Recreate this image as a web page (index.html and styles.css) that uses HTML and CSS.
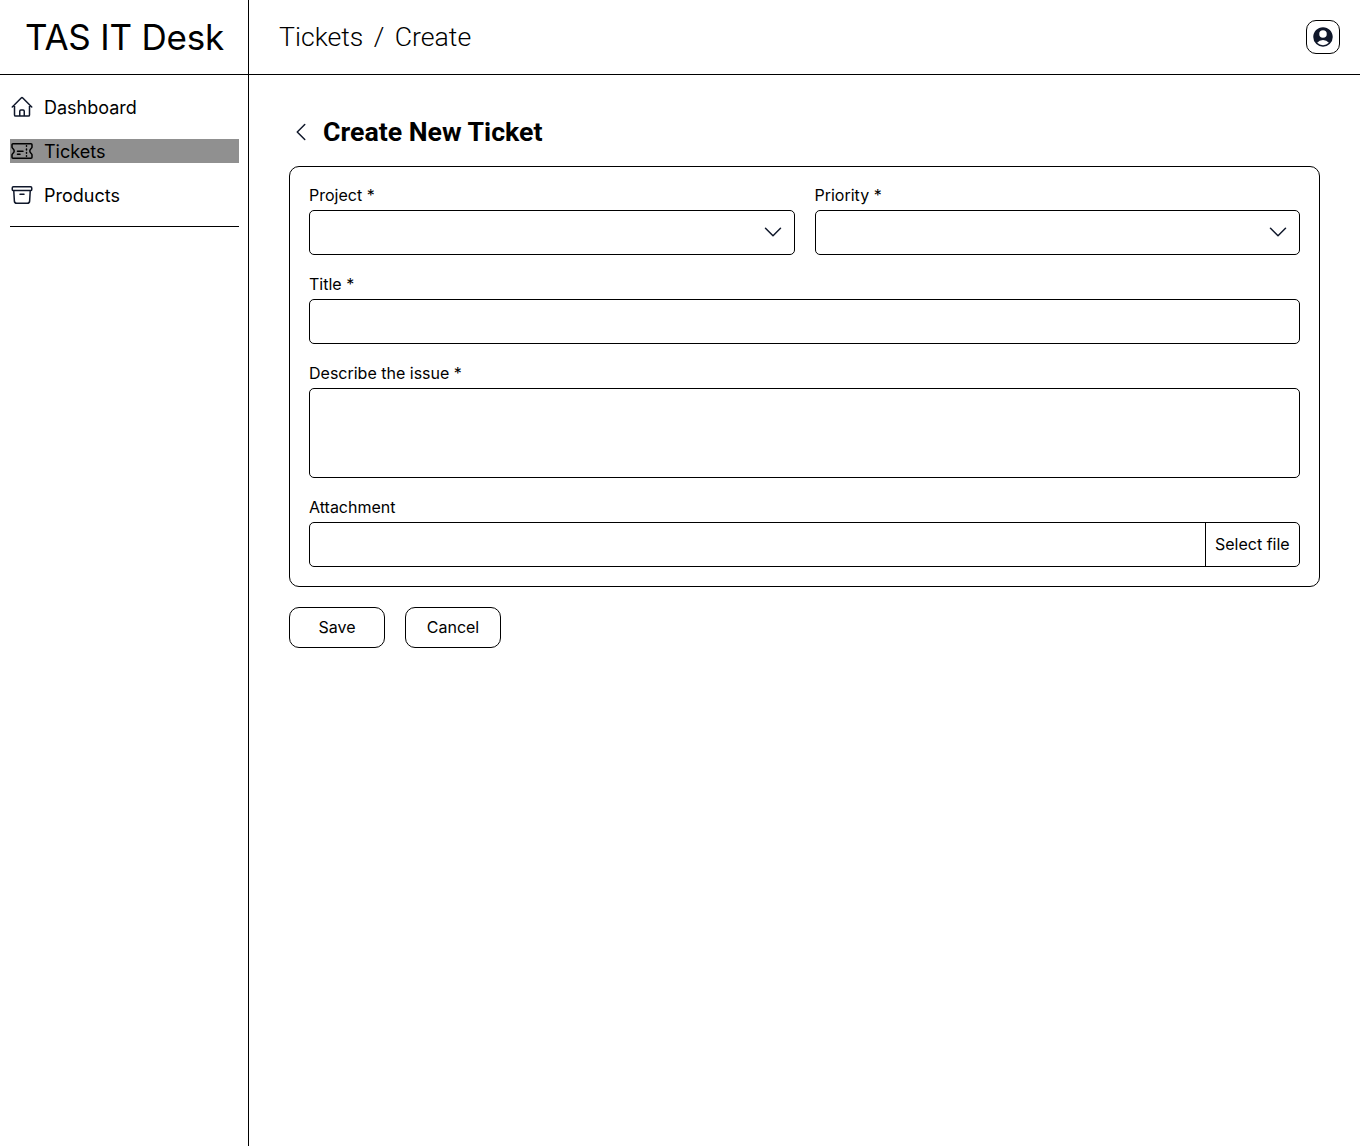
FILE: index.html
```html
<!DOCTYPE html>
<html lang="en">
<head>
<meta charset="utf-8">
<title>TAS IT Desk</title>
<link rel="stylesheet" href="styles.css">
</head>
<body>
<div class="app">
  <aside class="sidebar">
    <div class="brand">TAS IT Desk</div>
    <nav class="nav">
      <a class="nav-item">
        <svg class="icon" viewBox="0 0 24 24"><path d="M2.250 12l8.954-8.955a1.126 1.126 0 011.591 0L21.750 12M4.500 9.750v10.125c0 .621.504 1.125 1.125 1.125H9.750v-4.875c0-.621.504-1.125 1.125-1.125h2.250c.621 0 1.125.504 1.125 1.125V21h4.125c.621 0 1.125-.504 1.125-1.125V9.750M8.250 21h8.250"/></svg>
        <span>Dashboard</span>
      </a>
      <a class="nav-item active">
        <svg class="icon" viewBox="0 0 24 24"><path d="M3 4.700H21a1 1 0 011 1V8.300C22 9.300 19.800 10 19.800 12S22 14.700 22 15.700V18.300a1 1 0 01-1 1H3a1 1 0 01-1-1V15.700C2 14.700 4.200 14 4.200 12S2 9.300 2 8.300V5.700a1 1 0 011-1z"/><path d="M16.500 6.800v.5m0 2.800v.8m0 2.500v.8m0 2.500v.5M7.500 12.300h5.500M7.500 15.200h2.500"/></svg>
        <span>Tickets</span>
      </a>
      <a class="nav-item">
        <svg class="icon" viewBox="0 0 24 24"><path d="M20.250 7.500l-.625 10.632a2.250 2.250 0 01-2.247 2.118H6.622a2.250 2.250 0 01-2.247-2.118L3.750 7.500M10 11.250h4M3.375 7.500h17.250c.621 0 1.125-.504 1.125-1.125v-1.500c0-.621-.504-1.125-1.125-1.125H3.375c-.621 0-1.125.504-1.125 1.125v1.500c0 .621.504 1.125 1.125 1.125z"/></svg>
        <span>Products</span>
      </a>
    </nav>
  </aside>
  <div class="content">
    <header class="topbar">
      <div class="breadcrumb"><span>Tickets</span><span>/</span><span>Create</span></div>
      <button class="profile" aria-label="Profile">
        <svg class="icon solid" viewBox="0 0 24 24"><path fill-rule="evenodd" d="M18.685 19.097A9.723 9.723 0 0021.750 12c0-5.385-4.365-9.750-9.750-9.750S2.250 6.615 2.250 12a9.723 9.723 0 003.065 7.097A9.716 9.716 0 0012 21.750a9.716 9.716 0 006.685-2.653zm-12.540-1.285A7.486 7.486 0 0112 15a7.486 7.486 0 015.855 2.812A8.224 8.224 0 0112 20.250a8.224 8.224 0 01-5.855-2.438zM15.750 9a3.750 3.750 0 11-7.500 0 3.750 3.750 0 017.500 0z"/></svg>
      </button>
    </header>
    <main class="main">
      <div class="heading">
        <svg class="icon" viewBox="0 0 24 24"><path d="M15.750 19.500L8.250 12l7.500-7.500"/></svg>
        <h1>Create New Ticket</h1>
      </div>
      <form class="card">
        <div class="row">
          <div class="field">
            <label>Project *</label>
            <div class="control select"><svg class="icon" viewBox="0 0 24 24"><path d="M19.500 8.250l-7.500 7.500-7.500-7.500"/></svg></div>
          </div>
          <div class="field">
            <label>Priority *</label>
            <div class="control select"><svg class="icon" viewBox="0 0 24 24"><path d="M19.500 8.250l-7.500 7.500-7.500-7.500"/></svg></div>
          </div>
        </div>
        <div class="field">
          <label>Title *</label>
          <div class="control"></div>
        </div>
        <div class="field">
          <label>Describe the issue *</label>
          <div class="control multiline"></div>
        </div>
        <div class="field">
          <label>Attachment</label>
          <div class="control file"><span class="file-button">Select file</span></div>
        </div>
      </form>
      <div class="actions">
        <button class="button">Save</button>
        <button class="button">Cancel</button>
      </div>
    </main>
  </div>
</div>
</body>
</html>
```
FILE: styles.css
```css
* { box-sizing: border-box; }
body { margin: 0; background: #fff; color: #000; font: 400 16px/19px Inter, sans-serif; }
.app { display: flex; min-height: 1146px; }
.sidebar { width: 249px; flex: none; border-right: 1px solid #000; }
.brand { height: 75px; border-bottom: 1px solid #000; display: flex; align-items: center; justify-content: center; font-size: 35px; line-height: 44px; letter-spacing: -0.2px; padding-left: 1px; padding-bottom: 1px; white-space: nowrap; }
.nav { margin: 0 9px 0 10px; padding: 20px 0; display: flex; flex-direction: column; gap: 20px; border-bottom: 1px solid #000; height: 152px; }
.nav-item { display: flex; align-items: center; gap: 10px; height: 24px; font-size: 18px; line-height: 22px; }
.nav-item span { padding-top: 2px; }
.nav-item.active { background: #909090; }
.nav-item.active .icon { stroke: #000; }
.icon { width: 24px; height: 24px; flex: none; fill: none; stroke: #0f172a; stroke-width: 1.5; stroke-linecap: round; stroke-linejoin: round; }
.icon.solid { fill: #0f172a; stroke: none; }
.content { flex: 1; min-width: 0; }
.topbar { height: 75px; border-bottom: 1px solid #000; padding: 0 20px 0 30px; display: flex; align-items: center; justify-content: space-between; }
.breadcrumb { display: flex; gap: 10.4px; font: 300 26.67px/33px Roboto, sans-serif; padding-top: 1px; }
.profile { width: 34px; height: 34px; padding: 0; border: 1px solid #000; border-radius: 10px; background: #fff; display: flex; align-items: center; justify-content: center; }
.main { padding: 40px 40px 0; }
.heading { display: flex; align-items: center; gap: 10px; height: 33px; margin-bottom: 18px; }
h1 { margin: 0; font: 700 26.7px/33px Roboto, sans-serif; padding-top: 1px; }
.card { border: 1px solid #000; border-radius: 10px; padding: 19px; display: flex; flex-direction: column; gap: 20px; }
.row { display: flex; gap: 20px; }
.field { flex: 1; display: flex; flex-direction: column; gap: 5px; }
.control { height: 45px; border: 1px solid #000; border-radius: 5px; }
.select { display: flex; align-items: center; justify-content: flex-end; padding: 0 9px 1px 0; }
.multiline { height: 90px; }
.file { display: flex; justify-content: flex-end; }
.file-button { display: flex; align-items: center; border-left: 1px solid #000; width: 94px; padding-left: 9px; white-space: nowrap; }
.actions { display: flex; gap: 20px; margin-top: 20px; }
.button { width: 96px; height: 41px; padding: 0; border: 1px solid #000; border-radius: 10px; background: #fff; color: #000; font: 400 16px/19px Inter, sans-serif; }
```
